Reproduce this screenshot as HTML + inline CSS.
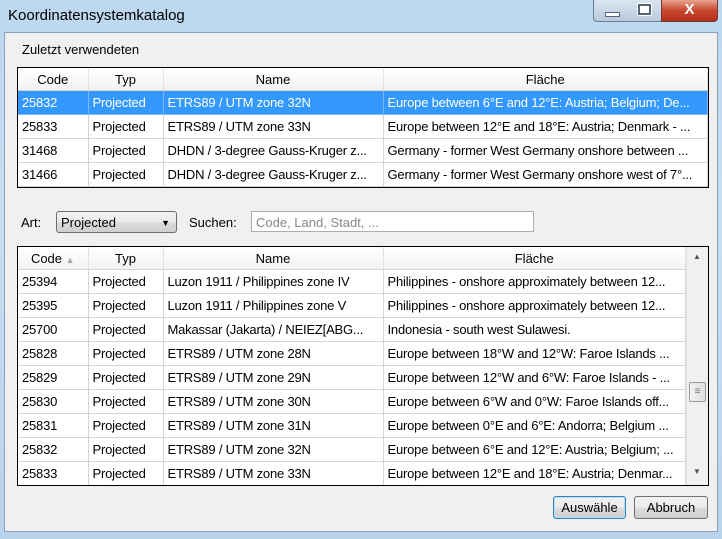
<!DOCTYPE html><html><head><style>
body{margin:0;width:722px;height:539px;overflow:hidden;background:linear-gradient(180deg,#bcd7ef,#c9def2 40%,#b9d3ec);font-family:"Liberation Sans",sans-serif;position:relative}
.t{position:absolute;left:8px;top:7px;font-size:15px;color:#000}
.client{position:absolute;left:4px;top:32px;width:712px;height:498px;background:#f0f0f0;border:1px solid #8aa0b8}
.abs{position:absolute}
table{border-collapse:collapse;font-size:13px;table-layout:fixed;background:#fff}
td{border-right:1px solid #d5d5d5;border-bottom:1px solid #d5d5d5;height:23px;padding:0 0 0 4px;white-space:nowrap;overflow:hidden;letter-spacing:-0.2px}
th{font-weight:normal;height:22px;padding:0;border-right:1px solid #e2e2e2;background:linear-gradient(#fff,#f3f3f3);border-bottom:1px solid #d5d5d5;font-size:13px}
tr.sel td{background:#3399ff;color:#fff;border-color:#7ab8ff}
.box{position:absolute;border:1px solid #000;background:#fff;overflow:hidden}
.btn{position:absolute;height:21px;border:1px solid #707070;border-radius:3px;background:linear-gradient(#f2f2f2,#ebebeb 50%,#dddddd 50%,#cfcfcf);font-size:13px;text-align:center;line-height:21px}
</style></head><body>
<div class="t">Koordinatensystemkatalog</div>
<div class="abs" style="left:593px;top:0;width:35px;height:21px;border:1px solid #6d7f94;border-top:none;border-radius:0 0 0 4px;background:linear-gradient(#dbe6f2,#b9cadd)"><div class="abs" style="left:11px;top:12px;width:13px;height:3px;background:#fff;border:1px solid #55657a"></div></div>
<div class="abs" style="left:628px;top:0;width:33px;height:21px;border-bottom:1px solid #6d7f94;background:linear-gradient(#dbe6f2,#b9cadd)"><div class="abs" style="left:10px;top:4px;width:9px;height:7px;border:2px solid #55657a;background:#fff;outline:1px solid #fff"></div></div>
<div class="abs" style="left:661px;top:0;width:55px;height:21px;border:1px solid #6d3a30;border-top:none;border-radius:0 0 4px 0;background:linear-gradient(#e8a593,#c8452c 50%,#b7301b);color:#fff;font-weight:bold;font-size:15px;text-align:center;line-height:20px">X</div>
<div class="client"></div>
<div class="abs" style="left:22px;top:42px;font-size:13px">Zuletzt verwendeten</div>
<div class="box" style="left:17px;top:67px;width:690px;height:119px">
<table style="width:690px"><colgroup><col style="width:70px"><col style="width:75px"><col style="width:220px"><col></colgroup>
<tr><th style="height:22px;box-sizing:border-box">Code</th><th>Typ</th><th>Name</th><th>Fläche</th></tr>
<tr class="sel"><td>25832</td><td>Projected</td><td>ETRS89 / UTM zone 32N</td><td>Europe between 6°E and 12°E: Austria; Belgium; De...</td></tr>
<tr><td>25833</td><td>Projected</td><td>ETRS89 / UTM zone 33N</td><td>Europe between 12°E and 18°E: Austria; Denmark - ...</td></tr>
<tr><td>31468</td><td>Projected</td><td>DHDN / 3-degree Gauss-Kruger z...</td><td>Germany - former West Germany onshore between ...</td></tr>
<tr><td>31466</td><td>Projected</td><td>DHDN / 3-degree Gauss-Kruger z...</td><td>Germany - former West Germany onshore west of 7°...</td></tr>
</table></div>
<div class="abs" style="left:21px;top:215px;font-size:13px">Art:</div>
<div class="abs" style="left:56px;top:211px;height:22px;border:1px solid #707070;border-radius:3px;background:linear-gradient(#f2f2f2,#ebebeb 50%,#dddddd 50%,#cfcfcf);font-size:13px;line-height:22px;padding-left:4px;box-sizing:border-box;width:121px">Projected<span style="position:absolute;right:6px;top:0;font-size:9px">▼</span></div>
<div class="abs" style="left:189px;top:215px;font-size:13px">Suchen:</div>
<div class="abs" style="left:251px;top:211px;width:283px;height:21px;border:1px solid #abadb3;background:#fff;font-size:13px;color:#888;line-height:21px;padding-left:4px;box-sizing:border-box">Code, Land, Stadt, ...</div>
<div class="box" style="left:17px;top:246px;width:690px;height:238px">
<table style="width:668px"><colgroup><col style="width:70px"><col style="width:75px"><col style="width:220px"><col></colgroup>
<tr><th style="height:22px;box-sizing:border-box">Code <span style="color:#aaa;font-size:9px">▲</span></th><th>Typ</th><th>Name</th><th>Fläche</th></tr>
<tr><td>25394</td><td>Projected</td><td>Luzon 1911 / Philippines zone IV</td><td>Philippines - onshore approximately between 12...</td></tr>
<tr><td>25395</td><td>Projected</td><td>Luzon 1911 / Philippines zone V</td><td>Philippines - onshore approximately between 12...</td></tr>
<tr><td>25700</td><td>Projected</td><td>Makassar (Jakarta) / NEIEZ[ABG...</td><td>Indonesia - south west Sulawesi.</td></tr>
<tr><td>25828</td><td>Projected</td><td>ETRS89 / UTM zone 28N</td><td>Europe between 18°W and 12°W: Faroe Islands ...</td></tr>
<tr><td>25829</td><td>Projected</td><td>ETRS89 / UTM zone 29N</td><td>Europe between 12°W and 6°W: Faroe Islands - ...</td></tr>
<tr><td>25830</td><td>Projected</td><td>ETRS89 / UTM zone 30N</td><td>Europe between 6°W and 0°W: Faroe Islands off...</td></tr>
<tr><td>25831</td><td>Projected</td><td>ETRS89 / UTM zone 31N</td><td>Europe between 0°E and 6°E: Andorra; Belgium ...</td></tr>
<tr><td>25832</td><td>Projected</td><td>ETRS89 / UTM zone 32N</td><td>Europe between 6°E and 12°E: Austria; Belgium; ...</td></tr>
<tr><td>25833</td><td>Projected</td><td>ETRS89 / UTM zone 33N</td><td>Europe between 12°E and 18°E: Austria; Denmar...</td></tr>
</table>
<div class="abs" style="left:668px;top:0;width:21px;height:238px;background:#f0f0f0;border-left:1px solid #e5e5e5">
<div class="abs" style="left:6px;top:5px;font-size:8px;color:#555">▲</div>
<div class="abs" style="left:2px;top:135px;width:15px;height:18px;border:1px solid #9a9a9a;border-radius:2px;background:linear-gradient(90deg,#f3f3f3,#dcdcdc);text-align:center;font-size:10px;line-height:17px;color:#777">≡</div>
<div class="abs" style="left:6px;top:220px;font-size:8px;color:#555">▼</div>
</div></div>
<div class="btn" style="left:553px;top:496px;width:71px;border-color:#3c7fb1;box-shadow:inset 0 0 0 1px #a8e2ff">Auswähle</div>
<div class="btn" style="left:634px;top:496px;width:72px">Abbruch</div>
</body></html>
